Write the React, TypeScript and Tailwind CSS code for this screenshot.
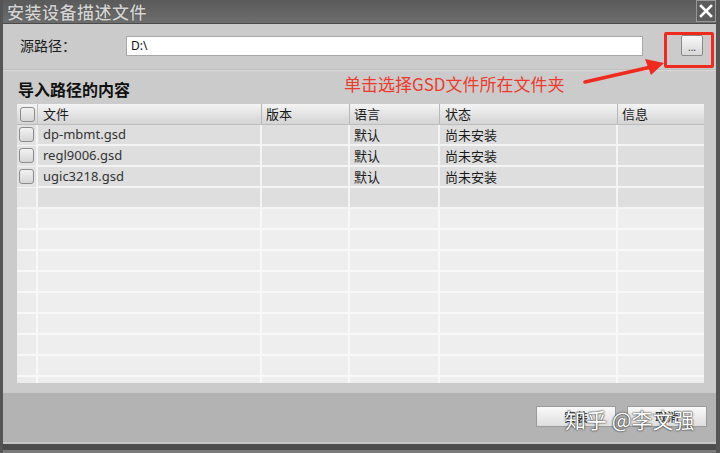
import React from "react";

const cjk = '"Noto Sans CJK SC", "Noto Sans", sans-serif';
const latin = '"Noto Sans", "Noto Sans CJK SC", sans-serif';

const rows = [
  { file: "dp-mbmt.gsd", lang: "默认", state: "尚未安装" },
  { file: "regl9006.gsd", lang: "默认", state: "尚未安装" },
  { file: "ugic3218.gsd", lang: "默认", state: "尚未安装" },
];

function Box() {
  return (
    <div className="w-[15px] h-[15px] rounded-[3px] border border-[#8c8c8c] bg-gradient-to-b from-[#f2f2f2] to-[#d6d6d6]" />
  );
}

export default function App() {
  const empty = Array.from({ length: 10 });
  return (
    <div
      className="relative w-[720px] h-[453px] flex flex-col bg-[#cbcbcb] border-l-[3px] border-r-[4px] border-[#555555] overflow-hidden"
      style={{ fontFamily: cjk }}
    >
      {/* title bar */}
      <div className="h-[24px] flex items-center justify-between bg-gradient-to-b from-[#5a5a5a] to-[#6e6e6e] border-b border-[#4a4a4a]">
        <span className="pl-[4px] text-[17px] leading-none font-medium text-[#d4d4d4] tracking-[0.5px] [text-shadow:0_0_1px_#333]">
          安装设备描述文件
        </span>
        <div className="w-[20px] h-[22px] -mt-[2px] border border-[#9a9a9a] bg-[#5c5c5c] flex items-center justify-center">
          <svg width="14" height="14" viewBox="0 0 14 14">
            <path d="M2 2 L12 12 M12 2 L2 12" stroke="#ffffff" strokeWidth="2.6" strokeLinecap="square" />
          </svg>
        </div>
      </div>

      {/* source path */}
      <div className="h-[46px] flex items-center pb-[2px] border-b border-[#bdbdbd] shadow-[0_1px_0_#dadada]">
        <span className="ml-[17px] w-[106px] text-[14px] text-[#1a1a1a]">源路径：</span>
        <div className="w-[517px] h-[20px] bg-white border border-[#a8a8a8] flex items-center pl-[4px] text-[12px] text-[#111]" style={{ fontFamily: latin }}>
          D:\
        </div>
        <div className="ml-[38px] w-[22px] h-[21px] rounded-[2px] border border-[#8a8a8a] bg-gradient-to-b from-[#f8f8f8] to-[#d8d8d8] flex items-end justify-center pb-[3px] text-[10px] leading-none text-[#333]" style={{ fontFamily: latin }}>
          ...
        </div>
      </div>

      {/* section heading */}
      <div className="h-[34px] flex items-center pl-[15px] pt-[4px]">
        <span className="text-[16px] font-bold text-[#111]">导入路径的内容</span>
      </div>

      {/* table */}
      <div className="ml-[14px] w-[687px] h-[279px] overflow-hidden bg-[#eeeeee]">
        <div className="grid grid-cols-[21px_224px_88px_90px_178px_86px] h-[21px] bg-gradient-to-b from-[#f4f4f4] to-[#d4d4d4] text-[13px] text-[#1a1a1a] border-b border-[#bdbdbd]">
          <div className="flex items-center justify-center border-r border-[#c4c4c4]"><Box /></div>
          <div className="flex items-center pl-[5px] border-r border-[#b8b8b8]">文件</div>
          <div className="flex items-center pl-[4px] border-r border-[#b8b8b8]">版本</div>
          <div className="flex items-center pl-[4px] border-r border-[#b8b8b8]">语言</div>
          <div className="flex items-center pl-[5px] border-r border-[#b8b8b8]">状态</div>
          <div className="flex items-center pl-[4px]">信息</div>
        </div>
        {rows.map((r) => (
          <div key={r.file} className="grid grid-cols-[21px_224px_88px_90px_178px_86px] h-[21px] bg-[#dedede] border-b-2 border-[#f4f4f4] text-[13px] text-[#1a1a1a]">
            <div className="flex items-center justify-center border-r-2 border-[#f4f4f4] bg-[#e2e2e2]"><Box /></div>
            <div className="flex items-center pl-[5px] border-r-2 border-[#f4f4f4] text-[#333]" style={{ fontFamily: latin }}>{r.file}</div>
            <div className="border-r-2 border-[#f4f4f4]" />
            <div className="flex items-center pl-[4px] border-r-2 border-[#f4f4f4]">{r.lang}</div>
            <div className="flex items-center pl-[5px] border-r-2 border-[#f4f4f4]">{r.state}</div>
            <div />
          </div>
        ))}
        <div className="grid grid-cols-[21px_224px_88px_90px_178px_86px] h-[21px] bg-[#dedede] border-b-2 border-[#f4f4f4]">
          <div className="border-r-2 border-[#f4f4f4] bg-[#e6e6e6]" />
          <div className="border-r-2 border-[#f4f4f4]" />
          <div className="border-r-2 border-[#f4f4f4]" />
          <div className="border-r-2 border-[#f4f4f4]" />
          <div className="border-r-2 border-[#f4f4f4]" />
          <div />
        </div>
        {empty.map((_, i) => (
          <div key={i} className="grid grid-cols-[21px_224px_88px_90px_178px_86px] h-[21px] bg-[#eeeeee] border-b-2 border-[#f8f8f8]">
            <div className="border-r-2 border-[#f8f8f8] bg-[#ececec]" />
            <div className="border-r-2 border-[#f8f8f8]" />
            <div className="border-r-2 border-[#f8f8f8]" />
            <div className="border-r-2 border-[#f8f8f8]" />
            <div className="border-r-2 border-[#f8f8f8]" />
            <div />
          </div>
        ))}
      </div>

      <div className="h-[10px]" />

      {/* footer */}
      <div className="flex-1 bg-[#b3b3b3] flex items-start justify-end pt-[13px] pr-[9px] gap-[11px]">
        <div className="w-[80px] h-[21px] border border-[#9a9a9a] bg-gradient-to-b from-[#fafafa] to-[#dedede] flex items-center justify-center text-[12px] text-[#222]">
          安装
        </div>
        <div className="w-[80px] h-[21px] border border-[#9a9a9a] bg-gradient-to-b from-[#fafafa] to-[#dedede] flex items-center justify-center text-[12px] text-[#222]">
          取消
        </div>
      </div>
      <div className="h-[2px] bg-[#c6c6c6]" />
      <div className="h-[6px] bg-[#4c4c4c]" />
      <div className="h-[3px] bg-[#7a7a7a]" />

      {/* annotation: red box, arrow, text */}
      <div className="absolute left-[661px] top-[32px] w-[50px] h-[36px] border-[3px] border-[#f02a1e] rounded-[2px]" />
      <svg className="absolute left-[570px] top-[55px]" width="95" height="35" viewBox="0 0 95 35">
        <path d="M12 27 L78 12" stroke="#f02a1e" strokeWidth="3.5" strokeLinecap="round" />
        <path d="M91 8 L72 4 L78 20 Z" fill="#f02a1e" />
      </svg>
      <span className="absolute left-[341px] top-[73px] text-[17px] leading-[22px] text-[#ee3a2c]">
        单击选择GSD文件所在文件夹
      </span>

      {/* watermark */}
      <span className="absolute left-[562px] top-[405px] text-[21px] leading-[28px] text-white [text-shadow:0_0_2px_#222,0_0_1px_#222]">
        知乎 @李文强
      </span>
    </div>
  );
}
